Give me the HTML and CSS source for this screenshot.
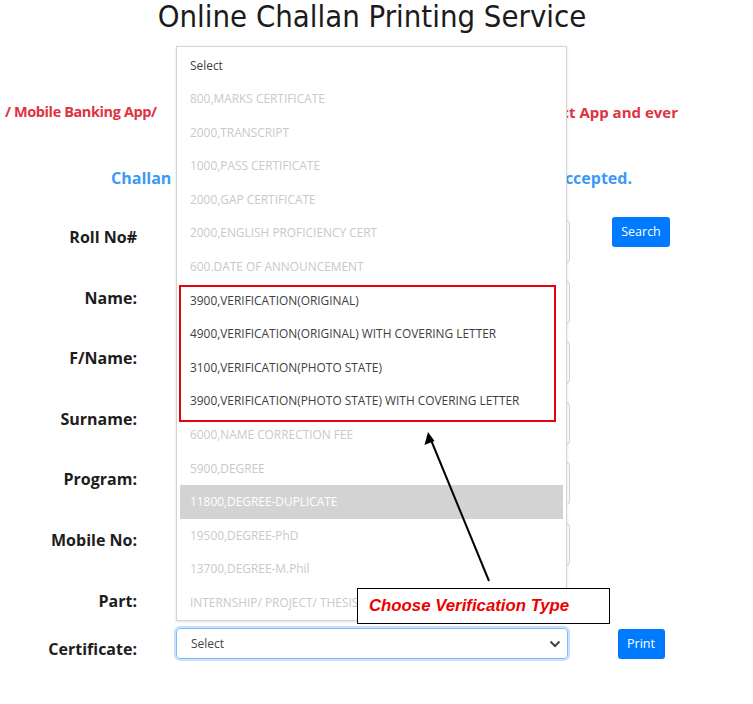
FILE: index.html
```html
<!DOCTYPE html>
<html>
<head>
<meta charset="utf-8">
<link rel="stylesheet" href="styles.css">
</head>
<body>
<div class="page">
  <h1 class="title">Online Challan Printing Service</h1>
  <p class="notice-red"><span class="r-left">/ Mobile Banking App/</span><span class="r-right">ct App and ever</span></p>
  <p class="notice-blue"><span class="b-left">Challan</span><span class="b-right">ccepted.</span></p>

  <form class="form">
    <div class="row">
      <label class="lbl">Roll No#</label>
      <input class="field" type="text">
      <div class="btn-cell"><button type="button" class="btn btn-search">Search</button></div>
    </div>
    <div class="row">
      <label class="lbl">Name:</label>
      <input class="field" type="text">
    </div>
    <div class="row">
      <label class="lbl">F/Name:</label>
      <input class="field" type="text">
    </div>
    <div class="row">
      <label class="lbl">Surname:</label>
      <input class="field" type="text">
    </div>
    <div class="row">
      <label class="lbl">Program:</label>
      <input class="field" type="text">
    </div>
    <div class="row">
      <label class="lbl">Mobile No:</label>
      <input class="field" type="text">
    </div>
    <div class="row row-part">
      <label class="lbl">Part:</label>
    </div>
    <div class="row row-cert">
      <label class="lbl lbl-cert">Certificate:</label>
      <div class="select">
        <span>Select</span>
        <svg class="chev" width="12" height="8" viewBox="0 0 12 8"><path d="M1.5 1.5 L6 6 L10.5 1.5" fill="none" stroke="#444" stroke-width="2"/></svg>
      </div>
      <div class="btn-cell"><button type="button" class="btn btn-print">Print</button></div>
    </div>
  </form>

  <ul class="dropdown">
    <li class="opt on">Select</li>
    <li class="opt">800,MARKS CERTIFICATE</li>
    <li class="opt">2000,TRANSCRIPT</li>
    <li class="opt">1000,PASS CERTIFICATE</li>
    <li class="opt">2000,GAP CERTIFICATE</li>
    <li class="opt">2000,ENGLISH PROFICIENCY CERT</li>
    <li class="opt">600.DATE OF ANNOUNCEMENT</li>
    <li class="opt on">3900,VERIFICATION(ORIGINAL)</li>
    <li class="opt on">4900,VERIFICATION(ORIGINAL) WITH COVERING LETTER</li>
    <li class="opt on">3100,VERIFICATION(PHOTO STATE)</li>
    <li class="opt on">3900,VERIFICATION(PHOTO STATE) WITH COVERING LETTER</li>
    <li class="opt">6000,NAME CORRECTION FEE</li>
    <li class="opt">5900,DEGREE</li>
    <li class="opt hl">11800,DEGREE-DUPLICATE</li>
    <li class="opt">19500,DEGREE-PhD</li>
    <li class="opt">13700,DEGREE-M.Phil</li>
    <li class="opt">INTERNSHIP/ PROJECT/ THESIS</li>
  </ul>

  <div class="redbox"></div>

  <svg class="arrow" width="753" height="704" viewBox="0 0 753 704">
    <line x1="489" y1="581" x2="431" y2="440" stroke="#000" stroke-width="2"/>
    <polygon points="428,432 424.5,445 434.5,441" fill="#000"/>
  </svg>

  <div class="callout">Choose Verification Type</div>
</div>
</body>
</html>
```

FILE: styles.css
```css
* { box-sizing: border-box; }
html, body { margin: 0; padding: 0; background: #fff; }
body {
  font-family: "Open Sans", "Noto Sans", sans-serif;
  color: #212529;
  width: 753px;
  height: 704px;
  overflow: hidden;
}
.page { position: relative; width: 753px; height: 704px; }

.title {
  margin: 0;
  padding-right: 9px;
  font-family: "DejaVu Sans Condensed", "DejaVu Sans", sans-serif;
  font-weight: normal;
  font-size: 30.8px;
  line-height: 32px;
  text-align: center;
  color: #1b1b1b;
}

.notice-red {
  margin: 70px 0 0;
  display: flex;
  justify-content: space-between;
  padding-left: 5px;
  padding-right: 75px;
  color: #e0323f;
  font-weight: bold;
  font-size: 14.5px;
  line-height: 20px;
  white-space: nowrap;
}
.r-left { letter-spacing: -0.4px; }
.r-right { font-size: 15px; }

.notice-blue {
  margin: 45px 0 0;
  display: flex;
  justify-content: space-between;
  padding-left: 111px;
  padding-right: 121px;
  color: #3b9af7;
  font-weight: bold;
  font-size: 16px;
  line-height: 22px;
}

.form {
  margin-top: 31px;
  display: flex;
  flex-direction: column;
}
.row {
  display: grid;
  grid-template-columns: 137px 394px 64px;
  column-gap: 39px;
  height: 43px;
  margin-bottom: 17.5px;
  align-items: center;
}
.lbl {
  grid-column: 1;
  text-align: right;
  font-weight: bold;
  font-size: 16px;
  color: #1d1d1d;
  padding-bottom: 9px;
}
.field {
  grid-column: 2;
  width: 394px;
  height: 43px;
  border: 1px solid #ced4da;
  border-radius: 4px;
  background: #fff;
  margin: 0;
}
.btn-cell {
  grid-column: 3;
  display: flex;
  justify-content: center;
}
.btn {
  background: #007bff;
  color: #fff;
  border: none;
  border-radius: 3px;
  font-family: "Open Sans", "Noto Sans", sans-serif;
  font-size: 12.5px;
  height: 30px;
  padding: 0 10px;
}
.btn-search { margin-top: -20px; width: 58px; padding: 0; }
.btn-print { width: 47px; padding: 0; }
.row-part { height: 38px; margin-bottom: 6px; }
.row-part .lbl { padding-bottom: 3px; }
.row-cert { height: 31px; margin-bottom: 0; }
.lbl-cert { padding-top: 11px; padding-bottom: 0; }
.select {
  grid-column: 2;
  width: 392px;
  height: 31px;
  border: 1px solid #80bdff;
  border-radius: 4px;
  box-shadow: 0 0 0 2px rgba(0,123,255,.22);
  display: flex;
  align-items: center;
  justify-content: space-between;
  padding: 0 6px 0 14px;
  font-size: 12px;
  color: #444;
}

.dropdown {
  position: absolute;
  left: 176px;
  top: 46px;
  width: 391px;
  height: 575px;
  margin: 0;
  padding: 1.5px 3px 0;
  list-style: none;
  background: #fff;
  border: 1px solid #d4d4d4;
  box-shadow: 0 1px 3px rgba(0,0,0,.12);
  font-family: "Open Sans", "Noto Sans", sans-serif;
  font-size: 11.9px;
  overflow: hidden;
}
.opt {
  height: 33.6px;
  line-height: 33.6px;
  padding-left: 10px;
  color: #c9c9c9;
  white-space: nowrap;
}
.opt.on { color: #404040; }
.opt.hl { background: #d3d3d3; color: #fff; }

.redbox {
  position: absolute;
  left: 179px;
  top: 285px;
  width: 377px;
  height: 137px;
  border: 2px solid #e8000b;
}

.arrow { position: absolute; left: 0; top: 0; pointer-events: none; }

.callout {
  position: absolute;
  left: 357px;
  top: 588px;
  width: 253px;
  height: 36px;
  background: #fff;
  border: 1px solid #000;
  font-family: "Liberation Sans", Arial, sans-serif;
  font-weight: bold;
  font-style: italic;
  font-size: 16.8px;
  color: #ee0000;
  line-height: 34px;
  padding-left: 11px;
}
```
